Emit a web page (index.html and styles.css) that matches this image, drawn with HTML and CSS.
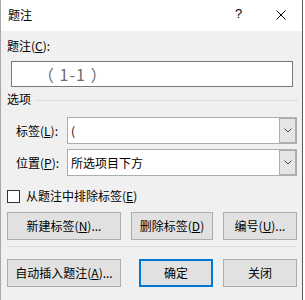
FILE: index.html
```html
<!DOCTYPE html>
<html lang="zh-CN">
<head>
<meta charset="utf-8">
<link rel="stylesheet" href="styles.css">
</head>
<body>
<div class="win">
  <div class="titlebar">
    <span class="title">题注</span>
    <span class="help">?</span>
    <svg class="close" width="10" height="10" viewBox="0 0 10 10"><path d="M0.5 0.5 L9.5 9.5 M9.5 0.5 L0.5 9.5" stroke="#000" stroke-width="1" fill="none"/></svg>
  </div>
  <div class="content">
    <div class="lbl cap-lbl">题注(<u>C</u>):</div>
    <div class="textbox">（ 1-1 ）</div>
    <div class="group"><span>选项</span><div class="rule"></div></div>
    <div class="fields">
      <div class="flabel">标签(<u>L</u>):</div>
      <div class="combo"><span class="val">(</span><span class="drop"><svg width="8" height="5" viewBox="0 0 8 5"><path d="M0.5 0.5 L4 4 L7.5 0.5" stroke="#444" fill="none"/></svg></span></div>
      <div class="flabel">位置(<u>P</u>):</div>
      <div class="combo"><span class="val">所选项目下方</span><span class="drop"><svg width="8" height="5" viewBox="0 0 8 5"><path d="M0.5 0.5 L4 4 L7.5 0.5" stroke="#444" fill="none"/></svg></span></div>
    </div>
    <div class="check"><span class="box"></span><span>从题注中排除标签(<u>E</u>)</span></div>
    <div class="btnrow">
      <div class="btn w114">新建标签(<u>N</u>)...</div>
      <div class="btn w82">删除标签(<u>D</u>)</div>
      <div class="btn w74">编号(<u>U</u>)...</div>
    </div>
    <div class="sep"></div>
    <div class="btnrow r2">
      <div class="btn w114">自动插入题注(<u>A</u>)...</div>
      <div class="btn w74 default">确定</div>
      <div class="btn w74">关闭</div>
    </div>
  </div>
</div>
</body>
</html>
```
FILE: styles.css
```css
* { box-sizing: border-box; }
html, body { margin: 0; padding: 0; background: #ffffff; }
body {
  font-family: "Noto Sans CJK SC", "Noto Sans", sans-serif;
  font-size: 12px;
  color: #000;
}
u { text-decoration: underline; text-underline-offset: 1px; }
.win {
  width: 303px;
  height: 300px;
  background: #f0f0f0;
  border-left: 1px solid #a8a8a8;
  border-right: 1px solid #5c5c5c;
  display: flex;
  flex-direction: column;
}
.titlebar {
  height: 31px;
  background: #fff;
  display: flex;
  align-items: center;
  position: relative;
}
.title { margin-left: 7px; font-size: 12px; line-height: 16px; margin-top: -2px; }
.help { position: absolute; left: 234px; top: 6px; font-size: 13px; line-height: 16px; font-family: "Liberation Sans", sans-serif; }
.close { position: absolute; left: 275px; top: 10px; }
.content { padding: 0 5px 0 6px; display: flex; flex-direction: column; }
.lbl { line-height: 16px; height: 16px; }
.cap-lbl { margin-top: 7px; }
.textbox {
  margin: 7px 0 0 4px;
  width: 282px;
  height: 26px;
  background: #fff;
  border: 1px solid #7a7a7a;
  color: #6d6d6d;
  font-size: 16px;
  line-height: 24px;
  padding-left: 26px;
  letter-spacing: 1px;
  white-space: pre;
}
.group { margin-top: 4px; height: 16px; line-height: 16px; display: flex; align-items: center; margin-right: -1px; }
.rule { flex: 1; height: 1px; background: #dcdcdc; margin-left: 5px; margin-top: 2px; }
.fields {
  margin-top: 10px;
  display: grid;
  grid-template-columns: 60px 230px;
  row-gap: 5px;
  align-items: center;
}
.flabel { padding-left: 9px; line-height: 16px; }
.combo {
  height: 27px;
  background: #fff;
  border: 1px solid #adadad;
  display: flex;
  align-items: stretch;
}
.val { flex: 1; padding-left: 3px; line-height: 25px; }
.drop {
  width: 17px;
  background: #e5e5e5;
  border: 1px solid #adadad;
  display: flex;
  align-items: center;
  justify-content: center;
}
.check { margin-top: 12px; height: 16px; display: flex; align-items: center; line-height: 16px; }
.box { width: 13px; height: 13px; border: 1px solid #333; background: #fff; margin-right: 6px; }
.btnrow { display: flex; gap: 10px; margin-top: 8px; }
.btnrow.r2 { margin-top: 12px; }
.btnrow.r2 .default { margin-left: 8px; }
.btn {
  height: 28px;
  background: #e1e1e1;
  border: 1px solid #adadad;
  display: flex;
  align-items: center;
  justify-content: center;
  line-height: 16px;
  white-space: nowrap;
}
.btn.default { border: 2px solid #0078d7; }
.w114 { width: 114px; }
.w82 { width: 82px; }
.w74 { width: 74px; }
.sep { height: 1px; background: #dcdcdc; margin-top: 6px; }
```
